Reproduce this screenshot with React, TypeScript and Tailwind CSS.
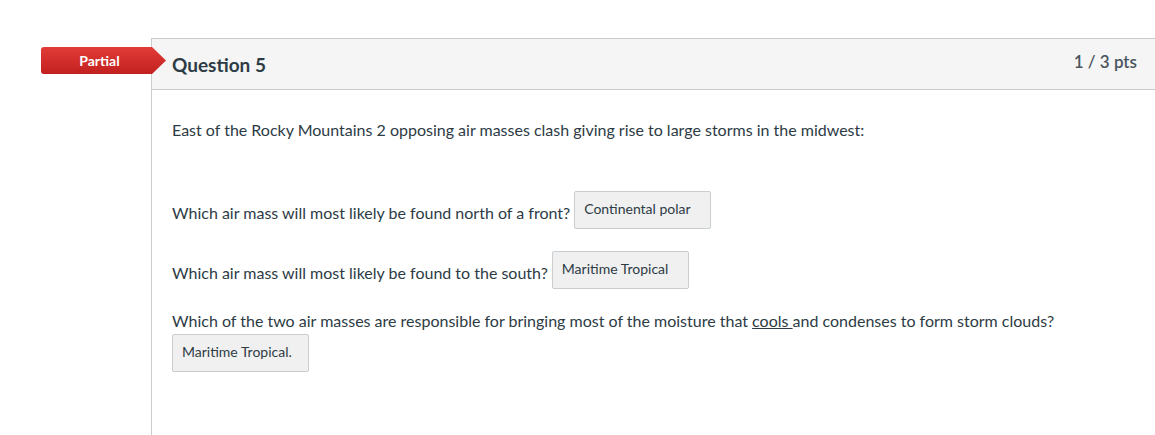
const lato = "font-['Lato','Liberation_Sans',sans-serif]";

function Badge() {
  return (
    <div className="relative z-10 h-[27px] w-[125px] rounded-l-[3px] bg-gradient-to-b from-[#e33b37] to-[#c1201f] [clip-path:polygon(0_0,111px_0,125px_50%,111px_100%,0_100%)] shadow-sm">
      <div className="flex h-full w-[117px] items-center justify-center text-[14px] font-bold text-white">
        Partial
      </div>
    </div>
  );
}

function Answer({ children }: { children: React.ReactNode }) {
  return (
    <div className="w-[137px] shrink-0 rounded-[2px] border border-[#c7cdd1] bg-[#f0f0f0] px-[9px] pt-[7px] pb-[9px] text-[14px] leading-[20px] text-[#2d3b45]">
      {children}
    </div>
  );
}

export default function App() {
  return (
    <div className={`${lato} flex h-[435px] w-[1155px] overflow-hidden bg-white pt-[38px] text-[#2d3b45]`}>
      <div className="w-[151px] shrink-0 pt-[9px] pl-[41px]">
        <Badge />
      </div>
      <div className="flex-1 border-t border-l border-[#c7cdd1]">
        <div className="flex h-[51px] items-center justify-between border-b border-[#c7cdd1] bg-[#f5f5f5] pr-[18px] pl-[20px]">
          <h2 className="pt-[3px] text-[19px] font-bold">Question 5</h2>
          <div className="pb-[4px] text-[17px] font-semibold text-[#4a555e]">1 / 3 pts</div>
        </div>
        <div className="px-[20px] pt-[30px] text-[16px] leading-[20px]">
          <p>
            East of the Rocky Mountains 2 opposing air masses clash giving rise to large storms in the midwest:
          </p>
          <div className="mt-[51px] flex items-start gap-[4px]">
            <span className="pt-[12px]">Which air mass will most likely be found north of a front?</span>
            <Answer>Continental polar</Answer>
          </div>
          <div className="mt-[22px] flex items-start gap-[4px]">
            <span className="pt-[12px]">Which air mass will most likely be found to the south?</span>
            <Answer>Maritime Tropical</Answer>
          </div>
          <p className="mt-[22px]">
            Which of the two air masses are responsible for bringing most of the moisture that{" "}
            <span className="underline">cools </span>and condenses to form storm clouds?
          </p>
          <div className="mt-[3px]">
            <Answer>Maritime Tropical.</Answer>
          </div>
        </div>
      </div>
    </div>
  );
}
